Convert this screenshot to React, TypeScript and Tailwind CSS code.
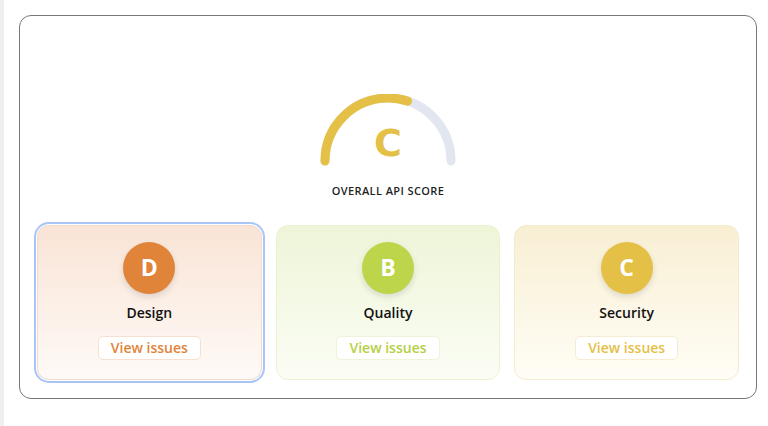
const cards = [
  {
    grade: 'D',
    label: 'Design',
    circle: 'bg-[#e0843a]',
    text: 'text-[#e0843a]',
    card: 'bg-gradient-to-b from-[#f9e4d6] to-[#fefaf7] border-[#f3dccd] ring-2 ring-[#a9c4f6] ring-offset-1',
    button: 'border-[#f5e0d2]',
  },
  {
    grade: 'B',
    label: 'Quality',
    circle: 'bg-[#bcd54a]',
    text: 'text-[#b5d046]',
    card: 'bg-gradient-to-b from-[#eef5d8] to-[#fbfdf4] border-[#eaf2d2]',
    button: 'border-[#eef4dc]',
  },
  {
    grade: 'C',
    label: 'Security',
    circle: 'bg-[#e5c046]',
    text: 'text-[#e5c046]',
    card: 'bg-gradient-to-b from-[#f8efd3] to-[#fffdf6] border-[#f5ebcd]',
    button: 'border-[#f5ecd3]',
  },
];

const Gauge = () => {
  const r = 63;
  const len = Math.PI * r;
  return (
    <div className="relative h-[72px] w-[136px]">
      <svg width="136" height="72" viewBox="0 0 136 72">
        <path d={`M 5 67 A ${r} ${r} 0 0 1 131 67`} fill="none" stroke="#e2e7ef" strokeWidth="9" strokeLinecap="round" />
        <path
          d={`M 5 67 A ${r} ${r} 0 0 1 131 67`}
          fill="none"
          stroke="#e5c046"
          strokeWidth="9"
          strokeLinecap="round"
          strokeDasharray={`${len * 0.6} ${len}`}
        />
      </svg>
      <div className="absolute inset-x-0 top-[27px] text-center font-['DejaVu_Sans',sans-serif] text-[38px] font-bold leading-[44px] text-[#e5c046]">
        C
      </div>
    </div>
  );
};

export default function App() {
  return (
    <div className="flex min-h-[426px] w-[768px] bg-white font-['Open_Sans',sans-serif]">
      <div className="w-[4px] shrink-0 bg-[#efefef]" />
      <div className="pl-[15px] pt-[15px]">
        <div className="flex h-[384px] w-[738px] flex-col items-center rounded-[12px] border border-[#777777] px-[17px] pt-[78px]">
          <Gauge />
          <p className="mt-[17px] text-[11px] font-semibold tracking-[0.4px] text-[#1f1f1f]">OVERALL API SCORE</p>
          <div className="mt-[25px] grid w-full grid-cols-3 gap-[14px]">
            {cards.map((c) => (
              <div key={c.label} className={`flex h-[155px] flex-col items-center rounded-[12px] border pt-[16px] ${c.card}`}>
                <div className={`flex h-[52px] w-[52px] items-center justify-center rounded-full text-[23px] font-bold text-white shadow-[0_3px_6px_rgba(0,0,0,0.12)] ${c.circle}`}>
                  {c.grade}
                </div>
                <p className="mt-[9px] text-[14px] font-semibold leading-[20px] text-[#111111]">{c.label}</p>
                <button className={`mt-[13px] h-[24px] rounded-[5px] border bg-white px-[12px] text-[14px] font-semibold leading-none ${c.text} ${c.button}`}>
                  View issues
                </button>
              </div>
            ))}
          </div>
        </div>
      </div>
    </div>
  );
}
